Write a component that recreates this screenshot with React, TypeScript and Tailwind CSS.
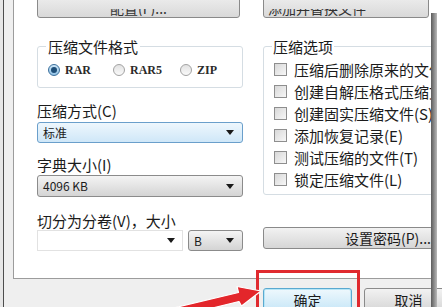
import clsx from "clsx";

function DropArrow() {
  return (
    <svg width="8" height="5" viewBox="0 0 8 5">
      <path d="M0 0h8L4 5z" fill="#1a1a1a" />
    </svg>
  );
}

function Select({
  text,
  blue,
  className,
}: {
  text: string;
  blue?: boolean;
  className?: string;
}) {
  return (
    <div
      className={clsx(
        "flex items-center justify-between rounded-[3px] border pl-[5px] pr-[8px] text-[12px] leading-[14px]",
        blue
          ? "border-[#6a9fcb] bg-linear-to-b from-[#eef7fd] to-[#cfe7f8]"
          : "border-[#8b8b8b] bg-linear-to-b from-[#f4f4f4] to-[#d4d4d4]",
        className
      )}
    >
      <span>{text}</span>
      <DropArrow />
    </div>
  );
}

function Radio({ label, checked, className }: { label: string; checked?: boolean; className?: string }) {
  return (
    <div className={clsx("flex items-center gap-[5px]", className)}>
      <span
        className={clsx(
          "flex h-[12px] w-[12px] items-center justify-center rounded-full border",
          checked
            ? "border-[#3a6f9c] bg-linear-to-b from-[#cde6f7] to-[#8fc0e4]"
            : "border-[#a2a2a2] bg-linear-to-b from-[#e2e2e2] to-[#fafafa]"
        )}
      >
        {checked && <span className="h-[6px] w-[6px] rounded-full bg-[#1d4e78]" />}
      </span>
      <span className="font-['Liberation_Serif',serif] text-[12px] font-bold leading-[14px] text-[#2a2a2a]">
        {label}
      </span>
    </div>
  );
}

function Check({ label }: { label: string }) {
  return (
    <div className="flex h-[22px] items-center gap-[7px] whitespace-nowrap">
      <span className="h-[13px] w-[13px] shrink-0 border border-[#8e8e8e] bg-linear-to-br from-[#d8d8d8] to-[#f7f7f7]" />
      <span className="text-[15px] leading-[17px]">{label}</span>
    </div>
  );
}

export default function App() {
  const options = [
    "压缩后删除原来的文件",
    "创建自解压格式压缩文件",
    "创建固实压缩文件(S)",
    "添加恢复记录(E)",
    "测试压缩的文件(T)",
    "锁定压缩文件(L)",
  ];

  return (
    <div className="relative flex h-[307px] w-[442px] overflow-hidden bg-white font-['Noto_Sans_CJK_SC','Noto_Sans',sans-serif] text-[#1b1b1b]">
      {/* left window frame */}
      <div className="w-[3px] shrink-0 bg-[#e6e6e6]" />
      <div className="w-[1px] shrink-0 bg-[#4d4d4d]" />
      <div className="w-[9px] shrink-0 bg-[#efefef]" />

      <div className="flex w-[418px] shrink-0 flex-col">
        {/* tab page */}
        <div className="flex h-[279px] shrink-0 gap-[20px] overflow-hidden border-b border-l border-[#9c9c9c] bg-white pl-[23px]">
          {/* left column */}
          <div className="flex w-[206px] shrink-0 flex-col">
            <div className="-mt-[9px] flex h-[27px] w-[203px] flex-col items-center justify-end rounded-[3px] border border-[#8a8a8a] bg-linear-to-b from-[#f2f2f2] to-[#d9d9d9] pb-[1px]">
              <div className="flex h-[7px] items-end overflow-hidden text-[14px] leading-[15px] text-[#333]">
                配置(F)...
              </div>
            </div>

            <fieldset className="mt-[20px] rounded-[3px] border border-[#d5dde3]">
              <legend className="ml-[8px] px-[2px] text-[15px] leading-[17px]">压缩文件格式</legend>
              <div className="mb-[10px] mt-[8px] flex h-[14px] items-center pl-[10px]">
                <Radio label="RAR" checked className="w-[65px]" />
                <Radio label="RAR5" className="w-[67px]" />
                <Radio label="ZIP" />
              </div>
            </fieldset>

            <div className="mt-[14px] text-[15px] leading-[17px]">压缩方式(C)</div>
            <Select text="标准" blue className="mt-[3px] h-[21px]" />

            <div className="mt-[13px] text-[15px] leading-[17px]">字典大小(I)</div>
            <Select text="4096 KB" className="mt-[2px] h-[22px]" />

            <div className="mt-[15px] text-[15px] leading-[17px]">切分为分卷(V)，大小</div>
            <div className="mt-[1px] flex h-[21px] gap-[5px]">
              <div className="flex w-[146px] items-center justify-end border border-[#e2e2e2] bg-white pr-[7px]">
                <DropArrow />
              </div>
              <Select text="B" className="w-[55px]" />
            </div>
          </div>

          {/* right column */}
          <div className="flex w-[260px] shrink-0 flex-col">
            <div className="-mt-[9px] flex h-[27px] w-[166px] items-end rounded-[3px] border border-[#8a8a8a] bg-linear-to-b from-[#f2f2f2] to-[#d9d9d9] pb-[1px] pl-[4px]">
              <div className="flex h-[7px] items-end overflow-hidden text-[14px] leading-[15px] text-[#333]">
                添加并替换文件
              </div>
            </div>

            <fieldset className="mt-[20px] rounded-[3px] border border-[#d5dde3]">
              <legend className="ml-[8px] px-[1px] text-[15px] leading-[17px]">压缩选项</legend>
              <div className="flex flex-col pb-[4px] pl-[10px] pt-[3px]">
                {options.map((o) => (
                  <Check key={o} label={o} />
                ))}
              </div>
            </fieldset>

            <div className="mt-[32px] flex h-[22px] w-[250px] items-center justify-center rounded-[3px] border border-[#8a8a8a] bg-linear-to-b from-[#f2f2f2] to-[#d6d6d6] text-[14px] leading-[16px]">
              设置密码(P)...
            </div>
          </div>
        </div>

        {/* dialog buttons */}
        <div className="flex flex-1 gap-[12px] bg-[#efefef] pl-[250px] pt-[9px]">
          <div className="flex h-[24px] w-[89px] shrink-0 items-center justify-center rounded-[3px] border border-[#5aa9d0] bg-linear-to-b from-[#eef8fd] to-[#c6e6f7] text-[14px] leading-[16px] shadow-[inset_0_0_0_1px_#b6e6f7]">
            确定
          </div>
          <div className="flex h-[24px] w-[89px] shrink-0 items-center justify-center rounded-[3px] border border-[#8a8a8a] bg-linear-to-b from-[#f2f2f2] to-[#d6d6d6] text-[14px] leading-[16px]">
            取消
          </div>
        </div>
      </div>

      {/* right window edge shadow */}
      <div className="flex w-[6px] shrink-0 flex-col">
        <div className="h-[13px] bg-white" />
        <div className="flex-1 bg-linear-to-r from-[#5c5c5c] to-[#b9b9b9]" />
      </div>

      {/* annotation overlay */}
      <div className="pointer-events-none absolute left-[256px] top-[270px] h-[45px] w-[104px] border-[3px] border-[#e02a2f]" />
      <svg className="pointer-events-none absolute left-0 top-0" width="442" height="307" viewBox="0 0 442 307">
        <path
          d="M168 319 L239 301.5 L241.5 306 L261 291 L237 286.5 L238.5 292.5 L165 310 Z"
          fill="#e3262b"
          stroke="#ffffff"
          strokeWidth="1.2"
          strokeLinejoin="round"
        />
      </svg>
    </div>
  );
}
